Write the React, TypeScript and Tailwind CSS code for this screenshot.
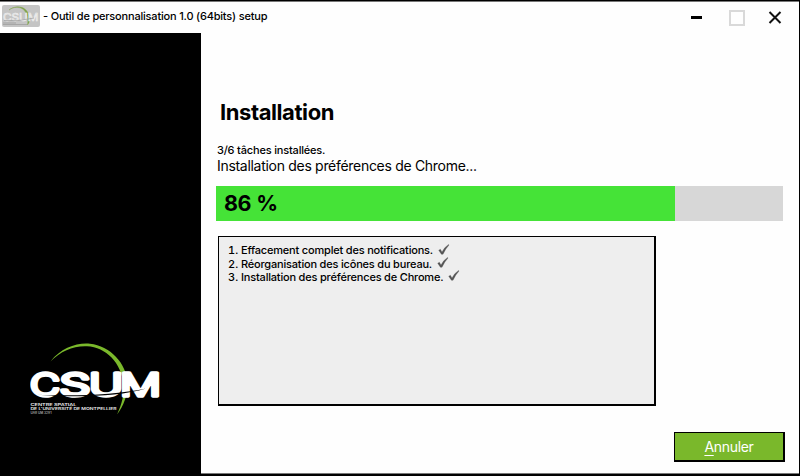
const tasks = [
  'Effacement complet des notifications.',
  'Réorganisation des icônes du bureau.',
  'Installation des préférences de Chrome.',
];

function Wordmark() {
  const letters = [
    { c: 'C', x: 0, w: 30 },
    { c: 'S', x: 29.5, w: 31 },
    { c: 'U', x: 59, w: 34 },
    { c: 'M', x: 90, w: 41 },
  ];
  return (
    <g fill="currentColor" stroke="currentColor" strokeWidth="3.4" strokeLinejoin="round" strokeLinecap="round" fontFamily="Inter, sans-serif" fontWeight="300" fontSize="31">
      {letters.map((l) => (
        <text key={l.c} x={l.x} y="53.700" textLength={l.w} lengthAdjust="spacingAndGlyphs">{l.c}</text>
      ))}
    </g>
  );
}

function Logo() {
  return (
    <svg viewBox="0 0 130 75" width="130" height="75" className="block text-white">
      <path d="M20.5 19.5C31 6 47 .5 60 1.8C80 4 96.5 21 97.5 41C98 53 93.5 64 87 72.5C92 62 94.500 52 93.500 42C91.500 21 76 5 57 4.200C43 3.600 31 9 20.500 19.500Z" fill="#7ab82b" />
      <Wordmark />
      <path d="M5 52.400C40 54.400 85 53.200 116 46.500C88 55 42 55.900 5 52.400Z" fill="#000" />
      <g fontFamily="Inter, sans-serif" fill="#eee" fontSize="3.400" fontWeight="600">
        <text x="0.500" y="63.900" textLength="46" lengthAdjust="spacingAndGlyphs">CENTRE SPATIAL</text>
        <text x="0.500" y="68.100" textLength="86" lengthAdjust="spacingAndGlyphs">DE L'UNIVERSITÉ DE MONTPELLIER</text>
        <text x="0.500" y="72.200" fontSize="3" fill="#aaa" textLength="21" lengthAdjust="spacingAndGlyphs">UAR UM 3291</text>
      </g>
    </svg>
  );
}

function MiniLogo() {
  return (
    <svg width="38" height="22" viewBox="0 0 38 22" className="block shrink-0">
      <rect width="38" height="22" rx="2" fill="#c4c4c4" />
      <path d="M7 5C14-.5 25 .5 27.500 12C28 16 27 18 25.500 20C27 12 24 2.500 15 2.300C12 2.200 9 3.500 7 5Z" fill="#7fa34a" stroke="#7fa34a" strokeWidth=".4" />
      <text x="1" y="15.500" fontFamily="Inter, sans-serif" fontSize="10.500" fill="#d2d2d2" stroke="#f2f2f2" strokeWidth=".5" textLength="35.500" lengthAdjust="spacingAndGlyphs">CSUM</text>
      <path d="M2 15.500Q18 16.500 32 13M1 18H14M1 19.500H25" stroke="#999" strokeWidth=".7" fill="none" />
    </svg>
  );
}

function Check() {
  return (
    <svg width="12" height="11" viewBox="0 0 12 11" className="mb-[3px] ml-[5px] block">
      <path d="M.7 6.200L2.400 5.300L4 8Q6.500 3 10.600.4L11 1Q7.300 5 5 10.300H3.400Z" fill="#555" stroke="#555" strokeWidth=".3" />
    </svg>
  );
}

export default function App() {
  return (
    <div className="flex h-[476px] w-[800px] flex-col overflow-hidden border-t border-r border-b-2 border-black bg-[#fefefe] font-['Inter',sans-serif] text-black">
      <header className="flex h-8 shrink-0 items-start border-t border-[#777] pt-[3px] pl-0.5">
        <MiniLogo />
        <span className="mt-[3px] ml-[3px] text-[11px] leading-4 font-medium tracking-[-0.19px] whitespace-nowrap">- Outil de personnalisation 1.0 (64bits) setup</span>
        <svg width="94" height="18" viewBox="0 0 94 18" className="mt-[3px] mr-[15px] ml-auto block" fill="none">
          <path d="M1 9.500H12" stroke="#000" strokeWidth="3" />
          <rect x="40" y="3" width="14" height="14" stroke="#d9d9d9" strokeWidth="2" />
          <path d="M79.500 4L90.500 15M90.500 4L79.500 15" stroke="#111" strokeWidth="2" />
        </svg>
      </header>
      <div className="flex min-h-0 flex-1">
        <aside className="flex w-[201px] shrink-0 flex-col justify-end bg-black pb-[57px] pl-[30px]">
          <Logo />
        </aside>
        <main className="flex flex-1 flex-col border-b border-[#777] pl-[15px]">
          <h1 className="mt-[65px] ml-1 text-[22px] leading-7 font-bold tracking-[-0.42px]">Installation</h1>
          <p className="mt-[17px] ml-px text-[11px] leading-[15px] font-medium tracking-[-0.18px]">3/6 tâches installées.</p>
          <p className="ml-px text-[14px] leading-4 tracking-[-0.3px]">Installation des préférences de Chrome...</p>
          <div className="mt-3 h-[35px] w-[567px] bg-[#d7d7d7]">
            <div className="flex h-full w-[459px] items-center bg-[#45e337] pl-2 text-[21.500px] font-bold tracking-[-0.4px] [word-spacing:0.500px]">86 %</div>
          </div>
          <div className="mt-[15px] ml-0.5 h-[170px] w-[438px] border-2 border-t border-l border-black bg-[#eee] pt-[7px] pl-[9px]">
            {tasks.map((t, i) => (
              <div key={t} className="flex h-[13.300px] items-center text-[11px] font-medium whitespace-nowrap">
                <span className="w-[13px] tabular-nums">{i + 1}.</span>
                <span className="tracking-[-0.19px]">{t}</span>
                <Check />
              </div>
            ))}
          </div>
          <button className="mt-[26px] mr-[14px] h-[30px] w-[111px] self-end border-2 border-t border-l border-black bg-[#7ab82b] text-[14px] tracking-[-0.3px] text-white">
            <span className="underline underline-offset-[3px]">A</span>nnuler
          </button>
        </main>
      </div>
    </div>
  );
}
